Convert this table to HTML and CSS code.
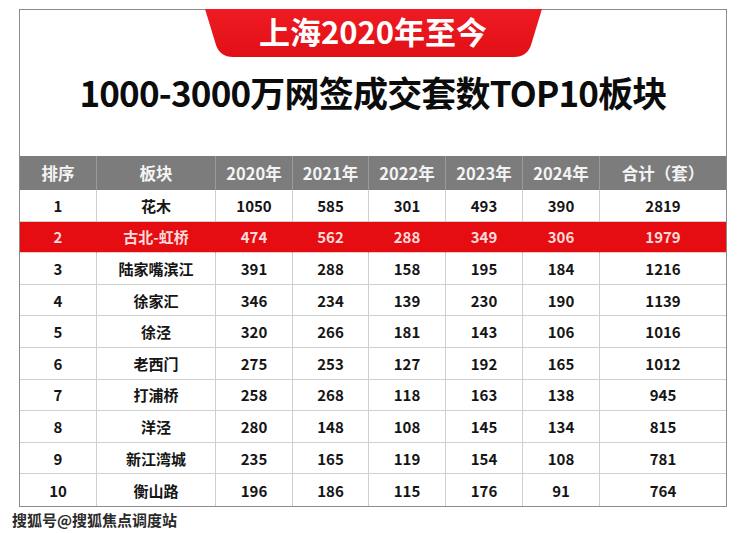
FILE: index.html
```html
<!DOCTYPE html>
<html lang="zh-CN">
<head>
<meta charset="utf-8">
<title>上海2020年至今 1000-3000万网签成交套数TOP10板块</title>
<link rel="stylesheet" href="styles.css">
</head>
<body>
<div class="board">
  <div class="head">
    <div class="tab">
      <svg class="tab-bg" viewBox="0 0 337 48" width="337" height="48" aria-hidden="true">
        <defs>
          <linearGradient id="tabg" x1="0" y1="0" x2="0" y2="1">
            <stop offset="0" stop-color="#ee1c22"/>
            <stop offset="1" stop-color="#e10f16"/>
          </linearGradient>
        </defs>
        <path d="M0 0 H337 L326 36 Q322 48 309 48 H28 Q15 48 11 36 Z" fill="url(#tabg)"/>
      </svg>
      <span class="tab-text">上海2020年至今</span>
    </div>
    <h1 class="title">1000-3000万网签成交套数TOP10板块</h1>
  </div>
  <div class="grid">
    <div class="c h">排序</div><div class="c h">板块</div><div class="c h">2020年</div><div class="c h">2021年</div><div class="c h">2022年</div><div class="c h">2023年</div><div class="c h">2024年</div><div class="c h">合计（套）</div>

    <div class="c">1</div><div class="c">花木</div><div class="c">1050</div><div class="c">585</div><div class="c">301</div><div class="c">493</div><div class="c">390</div><div class="c">2819</div>

    <div class="c r">2</div><div class="c r">古北-虹桥</div><div class="c r">474</div><div class="c r">562</div><div class="c r">288</div><div class="c r">349</div><div class="c r">306</div><div class="c r">1979</div>

    <div class="c">3</div><div class="c">陆家嘴滨江</div><div class="c">391</div><div class="c">288</div><div class="c">158</div><div class="c">195</div><div class="c">184</div><div class="c">1216</div>

    <div class="c">4</div><div class="c">徐家汇</div><div class="c">346</div><div class="c">234</div><div class="c">139</div><div class="c">230</div><div class="c">190</div><div class="c">1139</div>

    <div class="c">5</div><div class="c">徐泾</div><div class="c">320</div><div class="c">266</div><div class="c">181</div><div class="c">143</div><div class="c">106</div><div class="c">1016</div>

    <div class="c">6</div><div class="c">老西门</div><div class="c">275</div><div class="c">253</div><div class="c">127</div><div class="c">192</div><div class="c">165</div><div class="c">1012</div>

    <div class="c">7</div><div class="c">打浦桥</div><div class="c">258</div><div class="c">268</div><div class="c">118</div><div class="c">163</div><div class="c">138</div><div class="c">945</div>

    <div class="c">8</div><div class="c">洋泾</div><div class="c">280</div><div class="c">148</div><div class="c">108</div><div class="c">145</div><div class="c">134</div><div class="c">815</div>

    <div class="c">9</div><div class="c">新江湾城</div><div class="c">235</div><div class="c">165</div><div class="c">119</div><div class="c">154</div><div class="c">108</div><div class="c">781</div>

    <div class="c last">10</div><div class="c last">衡山路</div><div class="c last">196</div><div class="c last">186</div><div class="c last">115</div><div class="c last">176</div><div class="c last">91</div><div class="c last">764</div>
  </div>
</div>
<div class="mark">搜狐号@搜狐焦点调度站</div>
</body>
</html>
```

FILE: styles.css
```css
html, body {
  margin: 0;
  padding: 0;
  background: #ffffff;
}

body {
  font-family: "Noto Sans CJK SC", "Noto Sans", sans-serif;
  color: #111111;
  width: 740px;
  height: 533px;
  overflow: hidden;
}

.board {
  margin: 9px 0 0 19px;
  width: 708px;
  border: 1px solid #8c8c8c;
  box-sizing: border-box;
}

.head {
  height: 146px;
  display: flex;
  flex-direction: column;
  align-items: center;
}

.tab {
  margin-top: -1px;
  width: 337px;
  height: 48px;
  display: grid;
}

.tab-bg,
.tab-text {
  grid-area: 1 / 1;
}

.tab-text {
  color: #ffffff;
  font-size: 31px;
  font-weight: 700;
  line-height: 44px;
  text-align: center;
  align-self: start;
}

.title {
  margin: 15px 0 0 0;
  font-size: 35px;
  font-weight: 700;
  line-height: 40px;
  color: #0c0c0c;
  letter-spacing: -0.8px;
}

.grid {
  display: grid;
  grid-template-columns: 77px 119px 77px 76px 77px 77px 77px 1fr;
  grid-template-rows: 34px repeat(10, 31.6px);
}

.c {
  display: flex;
  align-items: center;
  justify-content: center;
  box-sizing: border-box;
  border-right: 1px solid #cfcfcf;
  border-bottom: 1px solid #cfcfcf;
  font-size: 15px;
  font-weight: 700;
  color: #151515;
  line-height: 1;
}

.c:nth-child(8n) {
  border-right: none;
}

.c.h {
  background: #7c7c7c;
  color: #f4f4f4;
  font-size: 16.5px;
  border-right-color: #9a9a9a;
  border-bottom: none;
}

.c.h:nth-child(8n) {
  border-right: none;
}

.c.r {
  background: #e50d12;
  color: #fbdada;
  border-right-color: #e50d12;
  border-bottom-color: #f0c8c8;
}

.c.last {
  border-bottom: none;
}

.mark {
  margin: 2px 0 0 12px;
  font-size: 15px;
  font-weight: 700;
  line-height: 22px;
  color: #2a2a2a;
  text-shadow: 0 0 1px #ffffff;
}
```
